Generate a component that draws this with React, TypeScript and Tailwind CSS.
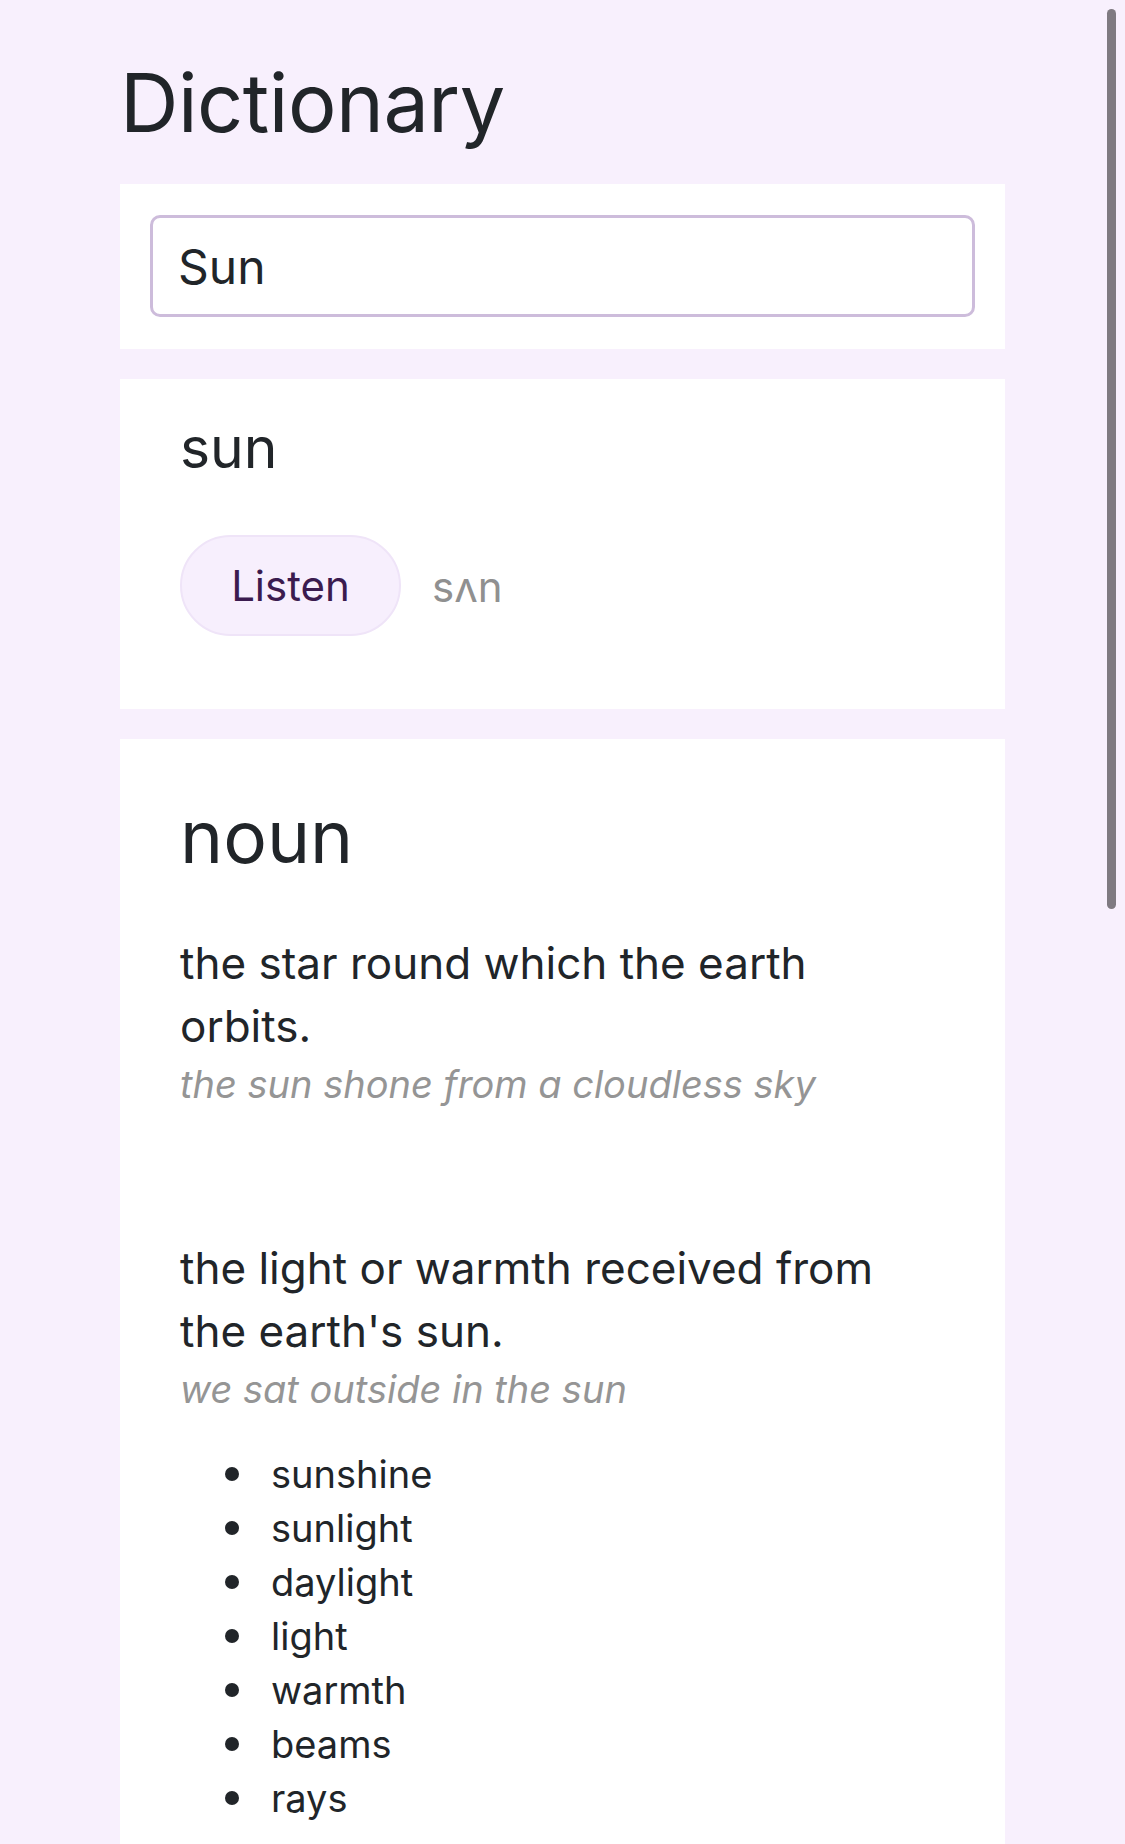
import React from "react";

interface Definition {
  text: string;
  example: string;
  synonyms: string[];
}

const definitions: Definition[] = [
  {
    text: "the star round which the earth orbits.",
    example: "the sun shone from a cloudless sky",
    synonyms: [],
  },
  {
    text: "the light or warmth received from the earth's sun.",
    example: "we sat outside in the sun",
    synonyms: ["sunshine", "sunlight", "daylight", "light", "warmth", "beams", "rays"],
  },
];

const font = { fontFamily: "Inter, 'Noto Sans', sans-serif" };

export default function App() {
  return (
    <div style={font} className="relative h-[1844px] overflow-hidden bg-[#f8f0fd] text-[#212529]">
      <div className="mx-auto w-[885px] pt-[63px]">
        <h1 className="text-[81px] leading-none font-normal tracking-[-0.5px] mb-[40px]">Dictionary</h1>

        {/* Search */}
        <div className="bg-white px-[30px] pt-[31px] pb-[32px] mb-[30px]">
          <input
            type="text"
            defaultValue="Sun"
            className="w-full h-[102px] border-[3px] border-[#cdbcdb] rounded-[10px] px-[25px] text-[48px] text-[#212529] bg-white outline-none"
            style={font}
          />
        </div>

        {/* Word header */}
        <div className="bg-white px-[60px] pt-[40px] pb-[73px] mb-[30px]">
          <h2 className="text-[57px] leading-none font-normal">sun</h2>
          <div className="flex items-center gap-[31px] mt-[59px]">
            <button className="w-[221px] h-[101px] rounded-full bg-[#f7effd] border-2 border-[#efe4f8] text-[42px] text-[#3b1b4f] flex items-center justify-center" style={font}>
              Listen
            </button>
            <span className="text-[42px] text-[#909090] pt-[2px]">sʌn</span>
          </div>
        </div>

        {/* Meanings */}
        <div className="bg-white px-[60px] pt-[61px] pb-[60px]">
          <h3 className="text-[73px] leading-none font-normal mb-[59px]">noun</h3>
          {definitions.map((d, i) => (
            <div key={i} className={i === 0 ? "mb-[127px]" : ""}>
              <p className="w-[730px] text-[44px] leading-[63px]">{d.text}</p>
              <p className="text-[38px] leading-[52px] italic text-[#959595]">{d.example}</p>
              {d.synonyms.length > 0 && (
                <ul className="mt-[32px] ml-[45px]">
                  {d.synonyms.map(s => (
                    <li key={s} className="flex items-center h-[54px] text-[38px]">
                      <span className="w-[14px] h-[14px] rounded-full bg-[#212529] mr-[32px] shrink-0" />
                      {s}
                    </li>
                  ))}
                </ul>
              )}
            </div>
          ))}
        </div>
      </div>

      {/* overlay scrollbar thumb */}
      <div className="absolute right-[9px] top-[9px] w-[9px] h-[900px] rounded-full bg-[#7f7a81]" />
    </div>
  );
}
